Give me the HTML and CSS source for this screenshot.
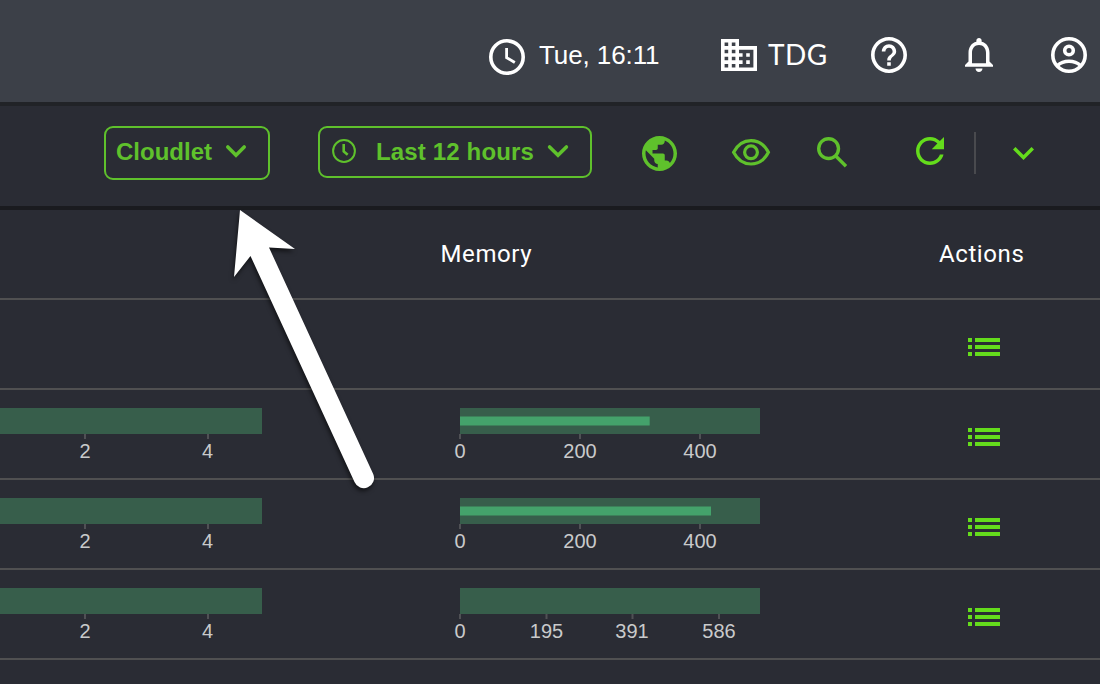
FILE: index.html
```html
<!DOCTYPE html>
<html lang="en">
<head>
<meta charset="utf-8">
<title>Cloudlet monitoring</title>
<link rel="stylesheet" href="styles.css">
</head>
<body>
<header class="topbar">
  <div class="clock">
    <svg width="36" height="36" viewBox="0 0 36 36"><circle class="line" cx="18" cy="18" r="16.200"/><path class="line hand" d="M17.600 9v9.600l8.200 4.900"/></svg>
    <span class="clock-text">Tue, 16:11</span>
  </div>
  <div class="org">
    <svg width="36" height="32" viewBox="2 3 20 18" preserveAspectRatio="none"><path d="M12 7V3H2v18h20V7H12zM6 19H4v-2h2v2zm0-4H4v-2h2v2zm0-4H4V9h2v2zm0-4H4V5h2v2zm4 12H8v-2h2v2zm0-4H8v-2h2v2zm0-4H8V9h2v2zm0-4H8V5h2v2zm10 12h-8v-2h2v-2h-2v-2h2v-2h-2V9h8v10zm-2-8h-2v2h2v-2zm0 4h-2v2h2v-2z"/></svg>
    <span class="org-text">TDG</span>
  </div>
  <svg class="help" width="36" height="36" viewBox="2 2 20 20"><path d="M11 18h2v-2h-2v2zm1-16C6.480 2 2 6.480 2 12s4.480 10 10 10 10-4.480 10-10S17.520 2 12 2zm0 18c-4.410 0-8-3.590-8-8s3.590-8 8-8 8 3.590 8 8-3.590 8-8 8zm0-14c-2.210 0-4 1.790-4 4h2c0-1.100.9-2 2-2s2 .9 2 2c0 2-3 1.750-3 5h2c0-2.250 3-2.500 3-5 0-2.210-1.790-4-4-4z"/></svg>
  <svg class="bell" width="28" height="34" viewBox="4 2.500 16 19.500" preserveAspectRatio="none"><path d="M12 22c1.100 0 2-.9 2-2h-4c0 1.100.9 2 2 2zm6-6v-5c0-3.070-1.630-5.640-4.500-6.320V4c0-.83-.67-1.500-1.500-1.500s-1.500.67-1.500 1.500v.68C7.640 5.360 6 7.920 6 11v5l-2 2v1h16v-1l-2-2zm-2 1H8v-6c0-2.480 1.510-4.500 4-4.500s4 2.020 4 4.500v6z"/></svg>
  <svg class="account" width="36" height="36" viewBox="0 0 36 36"><circle class="line" cx="18" cy="18" r="16.200"/><circle class="line" cx="18" cy="13.500" r="4.300"/><path class="line" d="M6.500 28.500C9.500 25.700 13.500 24.300 18 24.300s8.500 1.400 11.500 4.200"/></svg>
</header>

<nav class="toolbar">
  <button class="select select-kind">
    <span>Cloudlet</span>
    <svg class="chevron" width="20" height="13" viewBox="0 0 20 13"><path d="M1.800 2 10 10.200 18.200 2"/></svg>
  </button>
  <button class="select select-range">
    <svg class="small-clock" width="24" height="24" viewBox="0 0 24 24"><circle cx="12" cy="12" r="10.900"/><path class="hands" d="M11.700 5v7.500l4 3.300"/></svg>
    <span class="range-text">Last 12 hours</span>
    <svg class="chevron" width="20" height="13" viewBox="0 0 20 13"><path d="M1.600 2 10 10.200 18.400 2"/></svg>
  </button>
  <svg class="globe" width="35" height="35" viewBox="2 2 20 20"><path d="M12 2C6.480 2 2 6.480 2 12s4.480 10 10 10 10-4.480 10-10S17.520 2 12 2zm-1 17.930c-3.950-.49-7-3.850-7-7.930 0-.62.080-1.210.21-1.790L9 15v1c0 1.100.9 2 2 2v1.930zm6.900-2.540c-.26-.81-1-1.390-1.900-1.390h-1v-3c0-.55-.45-1-1-1H8v-2h2c.55 0 1-.45 1-1V7h2c1.100 0 2-.9 2-2v-.41c2.930 1.190 5 4.060 5 7.410 0 2.080-.8 3.970-2.100 5.390z"/></svg>
  <svg class="eye" width="38" height="27" viewBox="0 0 38 27"><path d="M1.600 13.300C5.500 5.700 11.500 1.600 19 1.600s13.500 4.100 17.400 11.700C32.500 20.900 26.500 25 19 25S5.500 20.900 1.600 13.300z"/><circle cx="19" cy="13.300" r="6.400"/></svg>
  <svg class="search" width="31" height="31" viewBox="0 0 31 31"><circle cx="11.600" cy="11.600" r="9.900"/><path d="M18.500 18.800 29 29.300"/></svg>
  <svg class="refresh" width="28" height="28" viewBox="4 4 16 16"><path d="M17.650 6.350C16.200 4.900 14.210 4 12 4c-4.420 0-7.990 3.580-7.990 8s3.570 8 7.990 8c3.730 0 6.840-2.550 7.730-6h-2.080c-.82 2.330-3.040 4-5.650 4-3.310 0-6-2.690-6-6s2.690-6 6-6c1.660 0 3.140.69 4.220 1.780L13 11h7V4l-2.350 2.350z"/></svg>
  <span class="divider"></span>
  <svg class="more" width="21" height="13" viewBox="6 8.590 12 7.410"><path d="M16.590 8.590 12 13.170 7.410 8.590 6 10l6 6 6-6z"/></svg>
</nav>

<main class="table">
  <div class="row head"><span></span><span class="memory">Memory</span><span class="actions">Actions</span></div>
  <div class="row">
    <span></span><span></span>
    <svg class="list" width="32" height="18" viewBox="0 0 32 18"><path d="M0 0h4v4H0zM7 0h25v4H7zM0 7h4v4H0zM7 7h25v4H7zM0 14h4v4H0zM7 14h25v4H7z"/></svg>
  </div>
  <div class="row">
    <svg class="chart disk" width="262" height="54" viewBox="0 0 262 54"><path class="track" d="M0 0h262v26H0z"/><path class="tick" d="M85 26v5M208 26v5"/><text x="85" y="50">2</text><text x="207.500" y="50">4</text></svg>
    <svg class="chart mem" width="300" height="54" viewBox="0 0 300 54"><path class="track" d="M0 0h300v26H0z"/><path class="value" d="M0 8.500h189.700v9H0z"/><path class="tick" d="M0 26v5M120 26v5M240 26v5"/><text x="0" y="50">0</text><text x="120" y="50">200</text><text x="240" y="50">400</text></svg>
    <svg class="list" width="32" height="18" viewBox="0 0 32 18"><path d="M0 0h4v4H0zM7 0h25v4H7zM0 7h4v4H0zM7 7h25v4H7zM0 14h4v4H0zM7 14h25v4H7z"/></svg>
  </div>
  <div class="row">
    <svg class="chart disk" width="262" height="54" viewBox="0 0 262 54"><path class="track" d="M0 0h262v26H0z"/><path class="tick" d="M85 26v5M208 26v5"/><text x="85" y="50">2</text><text x="207.500" y="50">4</text></svg>
    <svg class="chart mem" width="300" height="54" viewBox="0 0 300 54"><path class="track" d="M0 0h300v26H0z"/><path class="value" d="M0 8.500h251v9H0z"/><path class="tick" d="M0 26v5M120 26v5M240 26v5"/><text x="0" y="50">0</text><text x="120" y="50">200</text><text x="240" y="50">400</text></svg>
    <svg class="list" width="32" height="18" viewBox="0 0 32 18"><path d="M0 0h4v4H0zM7 0h25v4H7zM0 7h4v4H0zM7 7h25v4H7zM0 14h4v4H0zM7 14h25v4H7z"/></svg>
  </div>
  <div class="row">
    <svg class="chart disk" width="262" height="54" viewBox="0 0 262 54"><path class="track" d="M0 0h262v26H0z"/><path class="tick" d="M85 26v5M208 26v5"/><text x="85" y="50">2</text><text x="207.500" y="50">4</text></svg>
    <svg class="chart mem" width="300" height="54" viewBox="0 0 300 54"><path class="track" d="M0 0h300v26H0z"/><path class="tick" d="M0 26v5M86.500 26v5M172.500 26v5M259 26v5"/><text x="0" y="50">0</text><text x="86.500" y="50">195</text><text x="172" y="50">391</text><text x="259" y="50">586</text></svg>
    <svg class="list" width="32" height="18" viewBox="0 0 32 18"><path d="M0 0h4v4H0zM7 0h25v4H7zM0 7h4v4H0zM7 7h25v4H7zM0 14h4v4H0zM7 14h25v4H7z"/></svg>
  </div>
</main>

<svg class="pointer" width="200" height="310" viewBox="0 0 200 310"><path d="M40 20 95 59 69 57.500 173.200 284A10 10 0 0 1 154.500 292L50.500 66 34 87z"/></svg>
</body>
</html>
```

FILE: styles.css
```css
* { box-sizing: border-box; }
body {
  margin: 0;
  width: 1100px;
  height: 684px;
  overflow: hidden;
  background: #2a2c34;
  color: #fff;
  font-family: "Liberation Sans", Arial, sans-serif;
}
svg { display: block; flex: none; overflow: visible; }
span { white-space: nowrap; }

.topbar {
  display: flex;
  align-items: center;
  height: 106px;
  padding: 8px 0 0 489px;
  background: #3c4048;
  border-bottom: 4px solid #212327;
}
.topbar svg { fill: #fff; }
.topbar .line { fill: none; stroke: #fff; stroke-width: 3.6; }
.topbar .hand { stroke-width: 2.8; }
.clock { display: flex; align-items: center; width: 232px; margin-top: 4px; }
.clock-text { margin: -4px 0 0 14px; font-size: 26px; line-height: 30px; letter-spacing: -.1px; }
.org { display: flex; align-items: center; width: 150px; }
.org-text { margin: -2px 0 0 11px; font: 28px/34px Lato, sans-serif; letter-spacing: .4px; }
.bell { margin: 0 0 0 58px; }
.account { margin-left: 58px; }

.toolbar {
  display: flex;
  align-items: flex-start;
  height: 104px;
  padding: 20px 0 0 104px;
  border-bottom: 4px solid #1a1b1f;
  fill: #5fc12c;
}
.select {
  display: flex;
  align-items: flex-start;
  border: 2px solid #5fc12c;
  border-radius: 9px;
  background: none;
  color: #5fc12c;
  font: bold 24px/28px "Liberation Sans", Arial, sans-serif;
}
.select-kind { width: 166px; height: 54px; padding: 10px 0 0 10px; }
.select-range { width: 274px; height: 52px; margin-left: 48px; padding: 10px 0 0 12px; }
.chevron { margin: 7px 0 0 14px; fill: none; stroke: #5fc12c; stroke-width: 3.6; stroke-linecap: round; }
.small-clock { margin-top: 1px; fill: none; stroke: #5fc12c; stroke-width: 2; }
.hands { stroke-width: 2.6; }
.range-text { margin-left: 20px; letter-spacing: .15px; }
.globe { margin: 9.5px 0 0 49.5px; }
.eye { margin: 13px 0 0 55.5px; fill: none; stroke: #5fc12c; stroke-width: 3.2; }
.search { margin: 11px 0 0 47px; fill: none; stroke: #5fc12c; stroke-width: 3.4; }
.refresh { margin: 11px 0 0 68px; fill: #64dc1c; }
.divider { width: 2px; height: 42px; margin: 6px 0 0 30px; background: #494a4e; }
.more { margin: 21px 0 0 36.5px; fill: #64dc1c; }

.row {
  display: grid;
  grid-template-columns: 440px 498px 162px;
  align-items: start;
  height: 90px;
  border-bottom: 2px solid #505051;
}
.head { font: 24px/28px Roboto, sans-serif; letter-spacing: .6px; padding-top: 30px; }
.head .actions { padding-left: 1px; }
.head .memory { padding-left: .5px; }
.chart { margin-top: 18px; }
.mem { margin-left: 20px; }
.list { margin: 38px 0 0 30px; fill: #64dc1c; }
.chart text { fill: #c9cacb; font-size: 20px; text-anchor: middle; }
.track { fill: #375e4b; }
.value { fill: #44a26b; }
.tick { stroke: #505155; stroke-width: 2; }

.pointer {
  position: absolute;
  left: 200px;
  top: 190px;
  fill: #fff;
  filter: drop-shadow(-1px 3px 2px rgba(0, 0, 0, .55));
}
```
